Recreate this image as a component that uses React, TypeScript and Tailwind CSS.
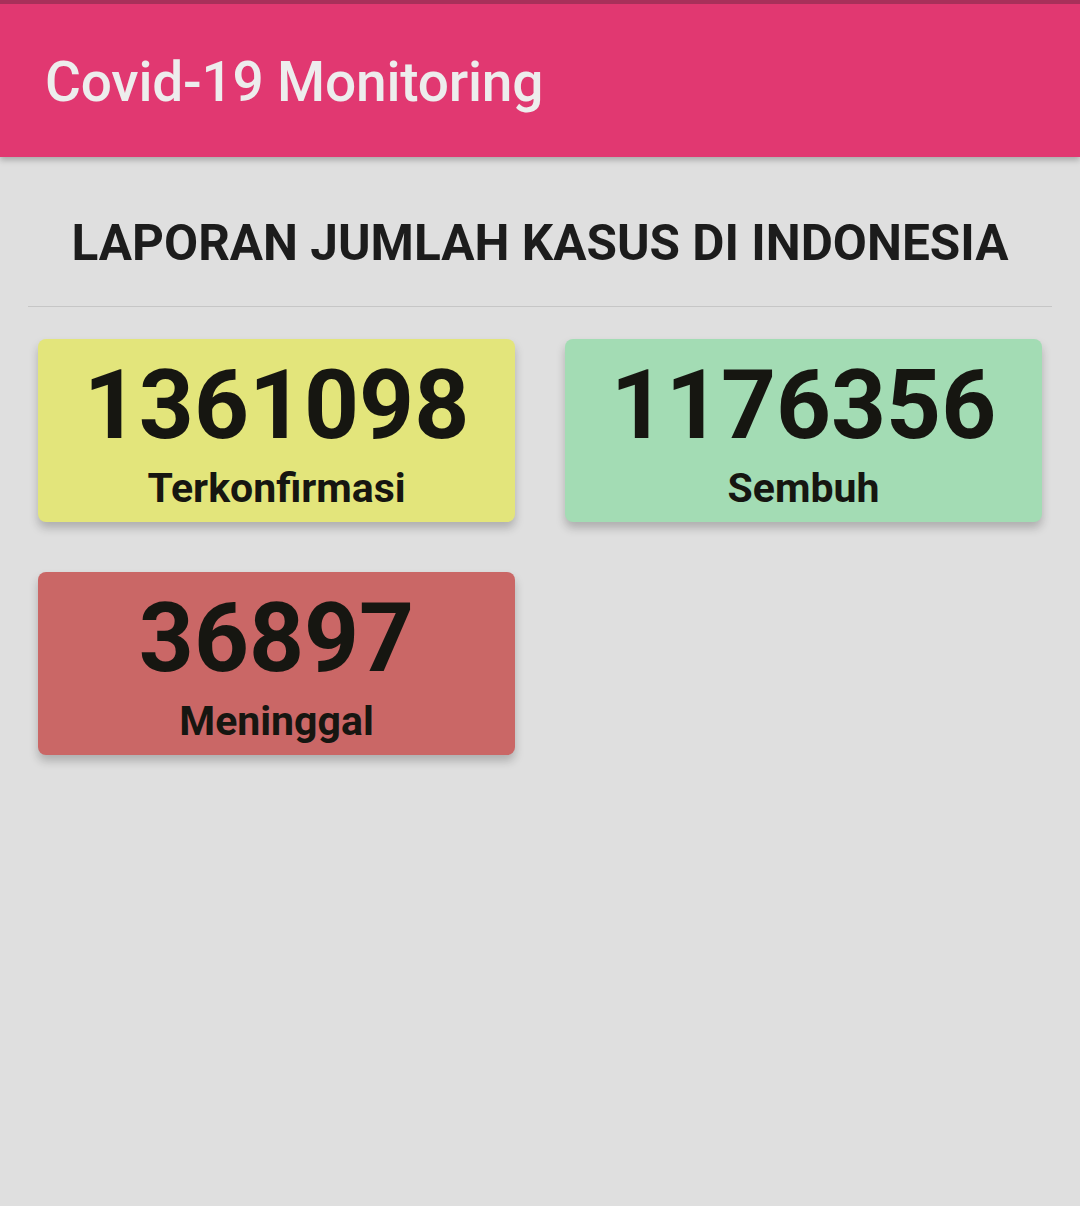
const stats = [
  { value: "1361098", label: "Terkonfirmasi", color: "bg-[#e3e57b]" },
  { value: "1176356", label: "Sembuh", color: "bg-[#a3dcb4]" },
  { value: "36897", label: "Meninggal", color: "bg-[#ca6766]" },
];

const App = () => {
  return (
    <div className="min-h-[1206px] bg-[#dfdfdf] font-['Roboto',sans-serif]">
      {/* App bar */}
      <div className="border-t-4 border-[#a8305a] bg-[#e13871] shadow-[0_3px_6px_rgba(0,0,0,0.25)]">
        <div className="flex h-[153px] items-center pt-[4px] pl-[45px]">
          <h1 className="text-[55px] font-medium leading-none tracking-[-0.2px] text-[#ededed]">
            Covid-19 Monitoring
          </h1>
        </div>
      </div>

      <div className="px-[28px]">
        <h2 className="pt-[62px] pb-[37px] text-center text-[49.5px] font-bold leading-none text-[#1c1c1c]">
          LAPORAN JUMLAH KASUS DI INDONESIA
        </h2>
        <div className="h-px bg-[#c6c6c6]" />

        {/* Cards */}
        <div className="grid grid-cols-2 gap-x-[50px] gap-y-[50px] px-[10px] pt-[32px]">
          {stats.map((s) => (
            <div
              key={s.label}
              className={`${s.color} flex h-[183px] flex-col items-center rounded-[8px] shadow-[0_6px_10px_rgba(0,0,0,0.22)]`}
            >
              <div className="pt-[16px] text-[96px] font-bold leading-[100px] text-[#161611]">
                {s.value}
              </div>
              <div className="pt-[13px] text-[41px] font-bold leading-none text-[#161611]">
                {s.label}
              </div>
            </div>
          ))}
        </div>
      </div>
    </div>
  );
};

export default App;
